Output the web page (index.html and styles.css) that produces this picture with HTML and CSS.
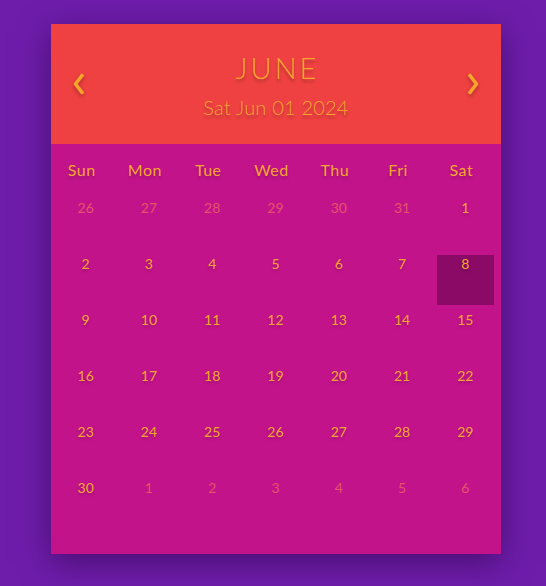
FILE: index.html
```html
<!DOCTYPE html>
<html>
<head>
<meta charset="utf-8">
<link rel="stylesheet" href="styles.css">
</head>
<body>
<div class="page">
  <div class="calendar">
    <div class="header">
      <button class="nav prev" aria-label="Previous month">
        <svg width="16" height="24" viewBox="0 0 16 24"><path d="M12 3.5 L5.5 12 L12 20.5" fill="none" stroke="currentColor" stroke-width="3.6" stroke-linecap="round" stroke-linejoin="round"/></svg>
      </button>
      <div class="title">
        <div class="month">JUNE</div>
        <div class="date">Sat Jun 01 2024</div>
      </div>
      <button class="nav next" aria-label="Next month">
        <svg width="16" height="24" viewBox="0 0 16 24"><path d="M4 3.5 L10.5 12 L4 20.5" fill="none" stroke="currentColor" stroke-width="3.6" stroke-linecap="round" stroke-linejoin="round"/></svg>
      </button>
    </div>
    <div class="body">
      <div class="weekdays">
        <div>Sun</div><div>Mon</div><div>Tue</div><div>Wed</div><div>Thu</div><div>Fri</div><div>Sat</div>
      </div>
      <div class="days">
        <div class="day other">26</div><div class="day other">27</div><div class="day other">28</div><div class="day other">29</div><div class="day other">30</div><div class="day other">31</div><div class="day">1</div>
        <div class="day">2</div><div class="day">3</div><div class="day">4</div><div class="day">5</div><div class="day">6</div><div class="day">7</div><div class="day selected">8</div>
        <div class="day">9</div><div class="day">10</div><div class="day">11</div><div class="day">12</div><div class="day">13</div><div class="day">14</div><div class="day">15</div>
        <div class="day">16</div><div class="day">17</div><div class="day">18</div><div class="day">19</div><div class="day">20</div><div class="day">21</div><div class="day">22</div>
        <div class="day">23</div><div class="day">24</div><div class="day">25</div><div class="day">26</div><div class="day">27</div><div class="day">28</div><div class="day">29</div>
        <div class="day">30</div><div class="day other">1</div><div class="day other">2</div><div class="day other">3</div><div class="day other">4</div><div class="day other">5</div><div class="day other">6</div>
      </div>
    </div>
  </div>
</div>
</body>
</html>
```
FILE: styles.css
```css
html, body {
  margin: 0;
  padding: 0;
  background: #6e1dab;
  height: 100%;
}
.page {
  padding: 24px 0 0 51px;
  font-family: "Lato", "Open Sans", sans-serif;
  color: #f6a531;
}
.calendar {
  width: 450px;
  height: 530px;
  background: #c3138b;
  box-shadow: 0 8px 30px rgba(40, 0, 60, 0.55);
  display: flex;
  flex-direction: column;
}
.header {
  height: 120px;
  background: #ef4141;
  display: grid;
  grid-template-columns: 54px 1fr 54px;
  align-items: center;
}
.nav {
  background: none;
  border: 0;
  padding: 0;
  color: #f7a42a;
  display: flex;
  justify-content: center;
  filter: drop-shadow(0 2px 2px rgba(0,0,0,0.3));
}
.prev { margin-left: -1px; }
.next { margin-left: -1px; }
.title {
  text-align: center;
  text-shadow: 0 3px 3px rgba(0,0,0,0.25);
  padding-top: 0;
}
.month {
  font-size: 29px;
  letter-spacing: 3px;
  line-height: 36px;
  font-weight: 300;
  padding-left: 3px;
}
.date {
  font-size: 20px;
  line-height: 24px;
  margin-top: 9px;
  font-weight: 300;
  letter-spacing: 0.2px;
}
.body {
  padding: 0 4px 0 3px;
}
.weekdays {
  display: grid;
  grid-template-columns: repeat(7, 1fr);
  height: 50px;
  align-items: center;
  font-size: 16px;
  letter-spacing: 0.5px;
  text-align: center;
  text-shadow: 0 3px 3px rgba(0,0,0,0.2);
  margin-left: -4px;
  margin-right: 4px;
}
.days {
  display: grid;
  grid-template-columns: repeat(7, 1fr);
  grid-auto-rows: 56px;
  margin-top: 2px;
}
.day {
  margin: 3px;
  padding-top: 1px;
  text-align: center;
  font-size: 14px;
  line-height: 16px;
  text-shadow: 0 2px 3px rgba(0,0,0,0.2);
}
.day.other {
  color: #e45468;
  text-shadow: none;
}
.day.selected {
  background: #8a0a66;
}
```
